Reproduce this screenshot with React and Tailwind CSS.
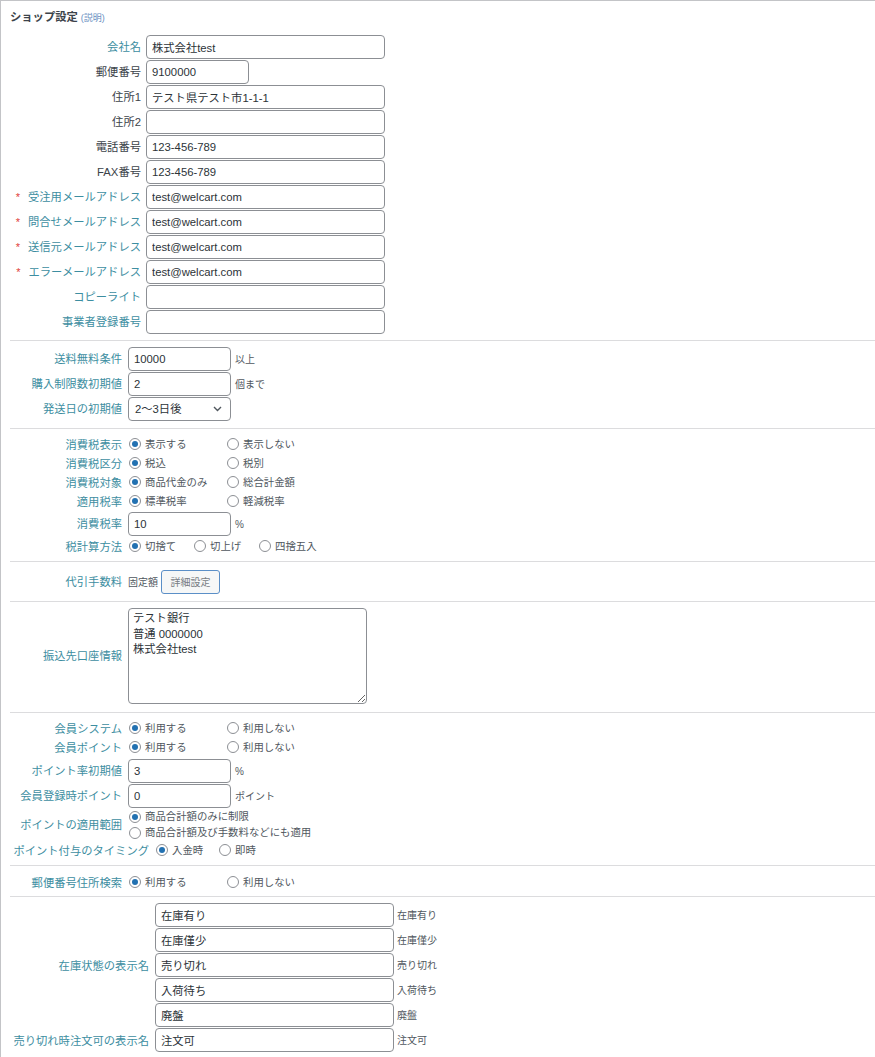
import React from "react";

const teal = "text-[#3d8ea1]";
const dark = "text-[#3c434a]";

function Label({ children, w, t = true, req }) {
  return (
    <div
      className={`${w} shrink-0 text-right text-[11.3px] leading-[14px] whitespace-nowrap ${t ? teal : dark}`}
    >
      {req && <span className="text-[#e0413a] mr-[8px] text-[11px]">*</span>}
      {children}
    </div>
  );
}

function TextInput({ w, value, ml = "ml-[6px]" }) {
  return (
    <input
      readOnly
      defaultValue={value}
      className={`${w} ${ml} h-[24px] border border-[#8c8f94] rounded-[4px] px-[5px] text-[11.3px] text-[#2c3338] bg-white outline-none`}
    />
  );
}

function Suffix({ children }) {
  return <span className="ml-[4px] text-[10px] text-[#50575e] whitespace-nowrap">{children}</span>;
}

function Radio({ checked, label, w = "" }) {
  return (
    <div className={`${w} flex items-center shrink-0`}>
      <span className="ml-px w-[12px] h-[12px] rounded-full border border-[#8c8f94] flex items-center justify-center bg-white shrink-0">
        {checked && <span className="w-[6px] h-[6px] rounded-full bg-[#2271b1]" />}
      </span>
      <span className="ml-[4px] text-[10.4px] text-[#50575e] whitespace-nowrap">{label}</span>
    </div>
  );
}

function Row1({ label, value, t = true, req, w = "w-[239px]" }) {
  return (
    <div className="flex items-center h-[24px] mb-px">
      <Label w="w-[131px]" t={t} req={req}>
        {label}
      </Label>
      <TextInput w={w} value={value} ml="ml-[5px]" />
    </div>
  );
}

function RadioRow({ label, a, b, wA = "w-[98px]", lw = "w-[112px]" }) {
  return (
    <div className="flex items-center h-[19px]">
      <Label w={lw}>{label}</Label>
      <div className="ml-[6px] flex items-center">
        <Radio checked label={a} w={wA} />
        <Radio label={b} />
      </div>
    </div>
  );
}

function InRow({ label, value, suffix, children }) {
  return (
    <div className="flex items-center h-[24px]">
      <Label w="w-[112px]">{label}</Label>
      {children ? children : <TextInput w="w-[103px]" value={value} />}
      {suffix && <Suffix>{suffix}</Suffix>}
    </div>
  );
}

function StockRow({ value, suffix }) {
  return (
    <div className="flex items-center h-[24px] mb-px">
      <TextInput w="w-[239px]" value={value} ml="ml-0" />
      <span className="ml-[3px] text-[10px] text-[#50575e] whitespace-nowrap">{suffix}</span>
    </div>
  );
}

export default function App() {
  const sec = "ml-[9px] border-b border-[#dcdcde]";
  return (
    <div className="w-[875px] min-h-[1057px] bg-white border-t border-l border-[#c3c4c7] font-['Liberation_Sans','Noto_Sans_CJK_JP',sans-serif] text-[#3c434a] overflow-hidden">
      <div className="h-[34px] pl-[9px] pt-[8px] leading-[16px] flex items-baseline">
        <span className="text-[11.3px] font-semibold text-[#3c434a]">ショップ設定</span>
        <span className="ml-[3px] text-[9px] text-[#6a8fbf]">(説明)</span>
      </div>

      {/* Section 1 */}
      <div className={`${sec} pb-[5px]`}>
        <Row1 label="会社名" value="株式会社test" />
        <Row1 label="郵便番号" value="9100000" t={false} w="w-[103px]" />
        <Row1 label="住所1" value="テスト県テスト市1-1-1" t={false} />
        <Row1 label="住所2" value="" t={false} />
        <Row1 label="電話番号" value="123-456-789" t={false} />
        <Row1 label="FAX番号" value="123-456-789" t={false} />
        <Row1 label="受注用メールアドレス" value="test@welcart.com" req />
        <Row1 label="問合せメールアドレス" value="test@welcart.com" req />
        <Row1 label="送信元メールアドレス" value="test@welcart.com" req />
        <Row1 label="エラーメールアドレス" value="test@welcart.com" req />
        <Row1 label="コピーライト" value="" />
        <Row1 label="事業者登録番号" value="" />
      </div>

      {/* Section 2 */}
      <div className={`${sec} pt-[6px] pb-[7px] flex flex-col gap-px`}>
        <InRow label="送料無料条件" value="10000" suffix="以上" />
        <InRow label="購入制限数初期値" value="2" suffix="個まで" />
        <InRow label="発送日の初期値">
          <div className="ml-[6px] w-[103px] h-[24px] border border-[#8c8f94] rounded-[4px] bg-white flex items-center justify-between pl-[6px] pr-[8px]">
            <span className="text-[11.3px] text-[#2c3338]">2〜3日後</span>
            <svg width="9" height="6" viewBox="0 0 9 6">
              <path d="M1 1 L4.5 4.5 L8 1" fill="none" stroke="#50575e" strokeWidth="1.4" />
            </svg>
          </div>
        </InRow>
      </div>

      {/* Section 3 tax */}
      <div className={`${sec} pt-[6px] pb-[5px]`}>
        <RadioRow label="消費税表示" a="表示する" b="表示しない" />
        <RadioRow label="消費税区分" a="税込" b="税別" />
        <RadioRow label="消費税対象" a="商品代金のみ" b="総合計金額" />
        <RadioRow label="適用税率" a="標準税率" b="軽減税率" />
        <div className="my-px">
          <InRow label="消費税率" value="10" suffix="%" />
        </div>
        <div className="flex items-center h-[19px]">
          <Label w="w-[112px]">税計算方法</Label>
          <div className="ml-[6px] flex items-center">
            <Radio checked label="切捨て" w="w-[65px]" />
            <Radio label="切上げ" w="w-[65px]" />
            <Radio label="四捨五入" />
          </div>
        </div>
      </div>

      {/* Section 4 */}
      <div className={`${sec} pt-[8px] pb-[7px]`}>
        <div className="flex items-center h-[24px]">
          <Label w="w-[112px]">代引手数料</Label>
          <span className="ml-[6px] text-[10px] text-[#50575e]">固定額</span>
          <div className="ml-[3px] w-[59px] h-[24px] border border-[#5b8fc7] rounded-[3px] bg-[#f6f7f7] flex items-center justify-center text-[10px] text-[#787c82]">
            詳細設定
          </div>
        </div>
      </div>

      {/* Section 5 */}
      <div className={`${sec} pt-[6px] pb-[8px]`}>
        <div className="flex items-center">
          <Label w="w-[112px]">振込先口座情報</Label>
          <textarea
            readOnly
            defaultValue={"テスト銀行\n普通 0000000\n株式会社test"}
            className="ml-[6px] w-[239px] h-[96px] border border-[#8c8f94] rounded-[4px] px-[4px] py-[2px] text-[11.3px] leading-[15.5px] text-[#2c3338] bg-white outline-none resize"
          />
        </div>
      </div>

      {/* Section 6 member */}
      <div className={`${sec} pt-[6px] pb-[5px]`}>
        <RadioRow label="会員システム" a="利用する" b="利用しない" />
        <RadioRow label="会員ポイント" a="利用する" b="利用しない" />
        <div className="mt-[2px] flex flex-col gap-px mb-px">
          <InRow label="ポイント率初期値" value="3" suffix="%" />
          <InRow label="会員登録時ポイント" value="0" suffix="ポイント" />
        </div>
        <div className="flex items-center h-[32px]">
          <Label w="w-[112px]">ポイントの適用範囲</Label>
          <div className="ml-[6px] flex flex-col">
            <div className="h-[16px] flex items-center">
              <Radio checked label="商品合計額のみに制限" />
            </div>
            <div className="h-[16px] flex items-center">
              <Radio label="商品合計額及び手数料などにも適用" />
            </div>
          </div>
        </div>
        <div className="flex items-center h-[19px]">
          <Label w="w-[139px]">ポイント付与のタイミング</Label>
          <div className="ml-[6px] flex items-center">
            <Radio checked label="入金時" w="w-[63px]" />
            <Radio label="即時" />
          </div>
        </div>
      </div>

      {/* Section 7 */}
      <div className={`${sec} pt-[7px] pb-[4px]`}>
        <RadioRow label="郵便番号住所検索" a="利用する" b="利用しない" />
      </div>

      {/* Section 8 */}
      <div className="ml-[9px] pt-[6px]">
        <div className="flex items-center">
          <Label w="w-[139px]">在庫状態の表示名</Label>
          <div className="ml-[6px] flex flex-col">
            <StockRow value="在庫有り" suffix="在庫有り" />
            <StockRow value="在庫僅少" suffix="在庫僅少" />
            <StockRow value="売り切れ" suffix="売り切れ" />
            <StockRow value="入荷待ち" suffix="入荷待ち" />
            <StockRow value="廃盤" suffix="廃盤" />
          </div>
        </div>
        <div className="flex items-center">
          <Label w="w-[139px]">売り切れ時注文可の表示名</Label>
          <div className="ml-[6px]">
            <StockRow value="注文可" suffix="注文可" />
          </div>
        </div>
      </div>
    </div>
  );
}
